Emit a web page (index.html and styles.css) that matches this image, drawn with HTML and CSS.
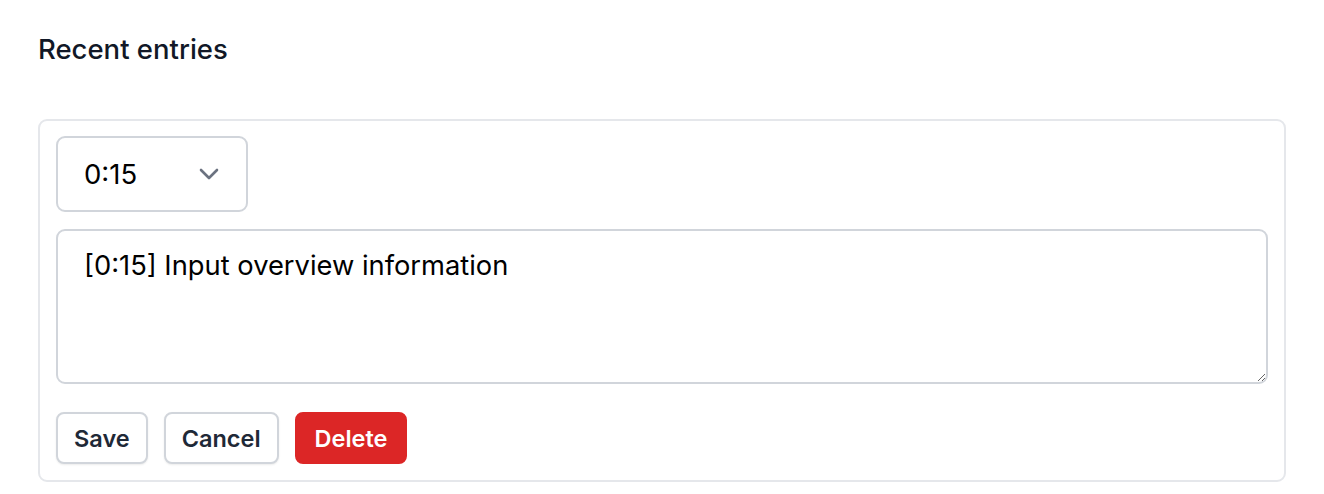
FILE: index.html
```html
<!DOCTYPE html>
<html lang="en">
<head>
<meta charset="utf-8">
<title>Recent entries</title>
<link rel="stylesheet" href="styles.css">
</head>
<body>
<main class="page">
  <h2 class="title">Recent entries</h2>
  <section class="card">
    <div class="select-wrap">
      <select class="select">
        <option>0:15</option>
      </select>
      <svg class="chevron" width="20" height="12" viewBox="0 0 20 12" aria-hidden="true">
        <path d="M2 2 L10 10 L18 2" fill="none" stroke="#6b7280" stroke-width="2.6" stroke-linecap="round" stroke-linejoin="round"/>
      </svg>
    </div>
    <textarea class="notes">[0:15] Input overview information</textarea>
    <div class="actions">
      <button class="btn btn-light">Save</button>
      <button class="btn btn-light">Cancel</button>
      <button class="btn btn-danger">Delete</button>
    </div>
  </section>
</main>
</body>
</html>
```
FILE: styles.css
```css
* { box-sizing: border-box; }
html, body { margin: 0; background: #ffffff; }
body { font-family: Inter, "Noto Sans", sans-serif; color: #111827; }
.page { padding: 31px 38px 0; }
.title {
  margin: 0 0 52px;
  font-size: 27.5px;
  line-height: 36px;
  font-weight: 500;
  color: #111827;
  letter-spacing: 0;
}
.card {
  width: 1248px;
  height: 363px;
  border: 2px solid #e5e7eb;
  border-radius: 9px;
  padding: 15px 16px;
  display: flex;
  flex-direction: column;
}
.select-wrap { position: relative; width: 192px; height: 76px; }
.select {
  appearance: none;
  -webkit-appearance: none;
  width: 100%;
  height: 100%;
  border: 2px solid #d1d5db;
  border-radius: 9px;
  background: #fff;
  padding: 0 0 0 26px;
  font-family: Inter, "Noto Sans", sans-serif;
  font-size: 27.5px;
  color: #000;
  outline: none;
}
.chevron { position: absolute; left: 143px; top: 32px; pointer-events: none; }
.notes {
  margin-top: 17px;
  width: 1212px;
  height: 155px;
  border: 2px solid #d1d5db;
  border-radius: 9px;
  padding: 18px 26px;
  font-family: Inter, "Noto Sans", sans-serif;
  font-size: 27.3px;
  line-height: 34px;
  color: #000;
  resize: vertical;
  outline: none;
}
.actions { display: flex; gap: 16px; margin-top: 28px; }
.btn {
  height: 52px;
  border-radius: 8px;
  font-family: Inter, "Noto Sans", sans-serif;
  font-size: 23.5px;
  font-weight: 600;
  padding: 0 16px;
  cursor: pointer;
}
.btn-light {
  background: #fff;
  color: #1f2937;
  border: 2px solid #d1d5db;
  box-shadow: 0 1px 2px rgba(0,0,0,0.08);
}
.btn-danger {
  background: #dc2626;
  color: #fff;
  border: 2px solid #dc2626;
  padding: 0 18px;
}
```
